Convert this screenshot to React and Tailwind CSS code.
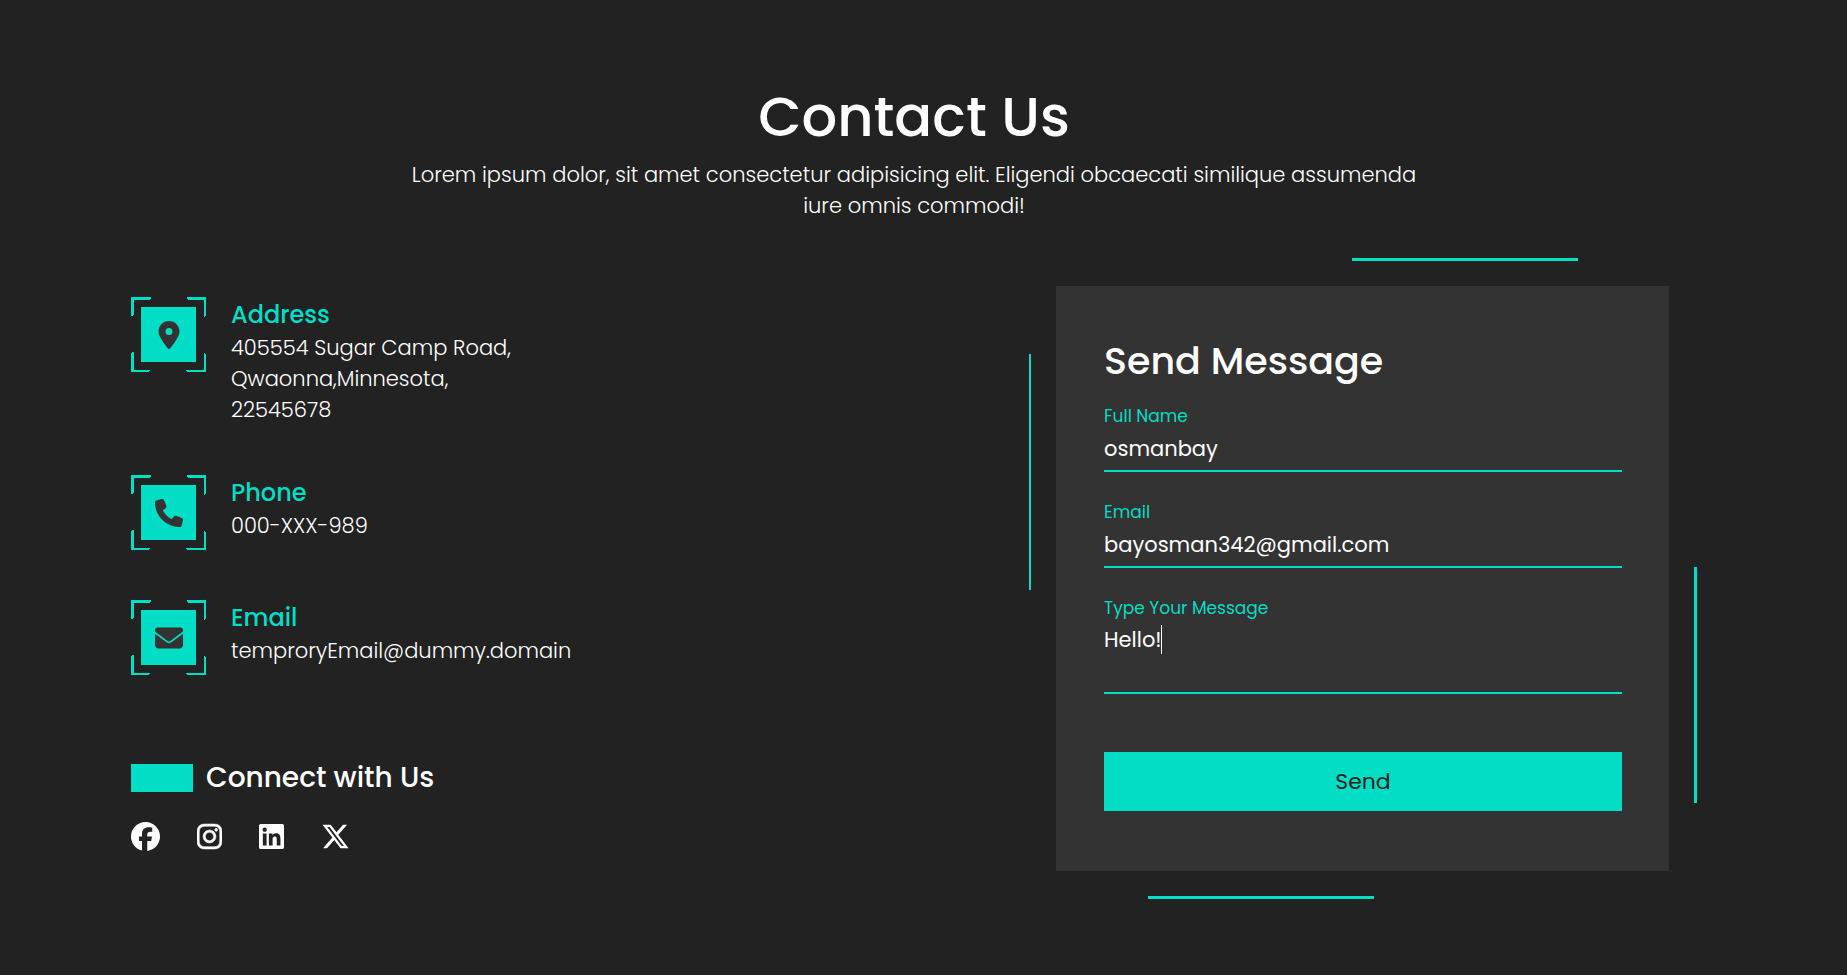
import React from "react";
import {
  FaLocationDot,
  FaPhone,
  FaEnvelope,
  FaFacebook,
  FaInstagram,
  FaLinkedin,
  FaXTwitter,
} from "react-icons/fa6";

const contacts = [
  { Icon: FaLocationDot, title: "Address", lines: ["405554 Sugar Camp Road,", "Qwaonna,Minnesota,", "22545678"] },
  { Icon: FaPhone, title: "Phone", lines: ["000-XXX-989"] },
  { Icon: FaEnvelope, title: "Email", lines: ["temproryEmail@dummy.domain"] },
];

const socials = [
  { Icon: FaFacebook, name: "Facebook", size: "h-[29px] w-[29px]" },
  { Icon: FaInstagram, name: "Instagram", size: "h-[29px] w-[25px] stroke-[10]" },
  { Icon: FaLinkedin, name: "LinkedIn", size: "h-[29px] w-[25px]" },
  { Icon: FaXTwitter, name: "X", size: "h-[29px] w-[29px]" },
];

function FramedIcon({ Icon }) {
  return (
    <div className="relative flex size-[75px] shrink-0 items-center justify-center">
      <svg viewBox="0 0 75 75" className="absolute inset-0 size-full" fill="#02ddc5" shapeRendering="crispEdges" aria-hidden="true">
        <path d="M0 0H20V2H19V3H3V18H2V19H0Z" />
        <path d="M56 0H75V19H74V20H73V3H57V2H56Z" />
        <path d="M0 56H1V55H3V73H19V74H18V75H0Z" />
        <path d="M75 75H56V74H55V73H73V56H74V57H75Z" />
      </svg>
      <span className="flex size-[55px] items-center justify-center bg-[#02ddc5] text-[#333333]">
        <Icon className="size-7" aria-hidden="true" />
      </span>
    </div>
  );
}

const labelClass = "block text-[17px] leading-6 text-[#02ddc5]";
const fieldClass =
  "block w-full rounded-none border-b-2 border-[#02ddc5] bg-transparent text-[21px] leading-[31px] text-white outline-none";

export default function App() {
  return (
    <main className="min-h-screen bg-[#222222] pt-[75px] pr-[150px] pb-[104px] pl-[131px] font-['Poppins','Inter',sans-serif] text-white">
      <header className="text-center">
        <h1 className="text-[56px] leading-[84px] font-medium">Contact Us</h1>
        <p className="mx-auto max-w-[1020px] text-[21px] leading-[31px] font-light">
          Lorem ipsum dolor, sit amet consectetur adipisicing elit. Eligendi obcaecati similique assumenda iure omnis
          commodi!
        </p>
      </header>

      <div className="mt-[65px] grid grid-cols-[925fr_613fr] pr-7">
        <section className="pt-[11px]">
          <ul className="flex flex-col gap-[50px]">
            {contacts.map(({ Icon, title, lines }) => (
              <li key={title} className="flex gap-[25px]">
                <FramedIcon Icon={Icon} />
                <div>
                  <h2 className="text-[24px] leading-[35px] font-medium text-[#02ddc5]">{title}</h2>
                  <p className="text-[21px] leading-[31px] font-light">
                    {lines.map((line) => (
                      <span key={line} className="block">
                        {line}
                      </span>
                    ))}
                  </p>
                </div>
              </li>
            ))}
          </ul>

          <div className="mt-[82px] flex items-center gap-[13px]">
            <span className="h-7 w-[62px] bg-[#02ddc5]" />
            <h2 className="text-[28px] leading-[41px] font-medium">Connect with Us</h2>
          </div>
          <nav aria-label="Social media" className="mt-6 flex gap-[37px]">
            {socials.map(({ Icon, name, size }) => (
              <a key={name} href="#" aria-label={name}>
                <Icon className={size} />
              </a>
            ))}
          </nav>
        </section>

        <section className="relative bg-[#333333] pt-[46px] pr-[47px] pb-[60px] pl-12">
          <span className="absolute -top-7 right-[91px] h-[3px] w-[226px] bg-[#02ddc5]" />
          <span className="absolute top-[68px] -left-[27px] h-[236px] w-[2px] bg-[#02ddc5]" />
          <span className="absolute -right-7 bottom-[68px] h-[236px] w-[3px] bg-[#02ddc5]" />
          <span className="absolute -bottom-7 left-[92px] h-[3px] w-[226px] bg-[#02ddc5]" />

          <h2 className="text-[38px] leading-[57px] font-medium">Send Message</h2>
          <form className="mt-[15px]" onSubmit={(e) => e.preventDefault()}>
            <div className="flex flex-col gap-7">
              <div>
                <label htmlFor="name" className={labelClass}>Full Name</label>
                <input id="name" type="text" defaultValue="osmanbay" className={`${fieldClass} h-11 pb-[2px]`} />
              </div>
              <div>
                <label htmlFor="email" className={labelClass}>Email</label>
                <input id="email" type="email" defaultValue="bayosman342@gmail.com" className={`${fieldClass} h-11 pb-[2px]`} />
              </div>
              <div className="relative">
                <label htmlFor="message" className={labelClass}>Type Your Message</label>
                <textarea id="message" defaultValue="Hello!" className={`${fieldClass} h-[74px] resize-none overflow-hidden pt-1`} />
                <span className="absolute top-[29px] left-[57px] h-[29px] w-px bg-white" />
              </div>
            </div>
            <button type="submit" className="mt-[58px] h-[59px] w-full bg-[#02ddc5] text-[22px] text-[#222222]">
              Send
            </button>
          </form>
        </section>
      </div>
    </main>
  );
}
